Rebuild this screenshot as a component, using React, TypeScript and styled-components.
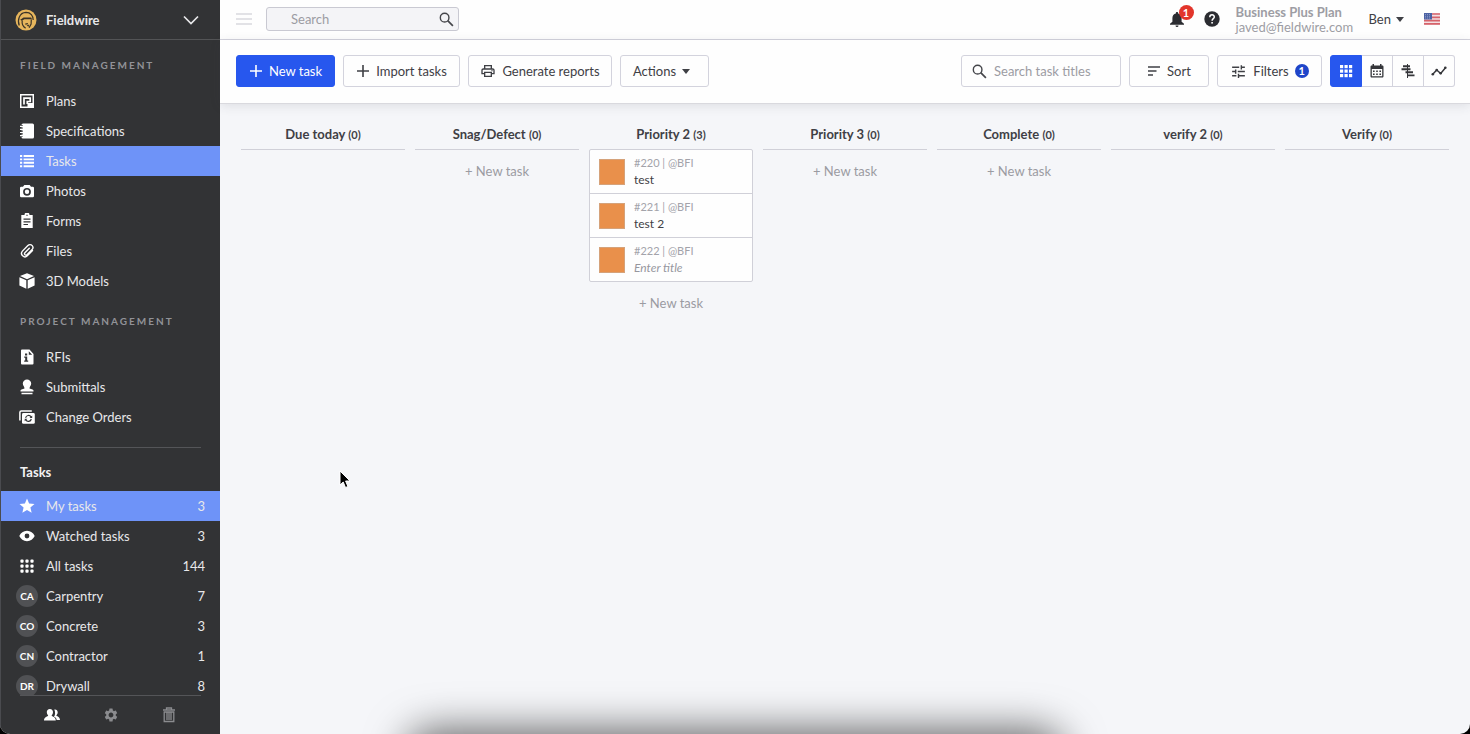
import React from "react";
import styled, { createGlobalStyle } from "styled-components";
import { MdTune, MdOutlinePrint, MdSettings, MdStar } from "react-icons/md";

const Global = createGlobalStyle`
  * { box-sizing: border-box; }
  html, body, #root { height: 100%; }
  body { margin: 0; background: #000; font-family: Lato, "Liberation Sans", sans-serif; font-size: 13px; color: #3f4045; }
  button, input { font: inherit; color: inherit; }
  button { cursor: pointer; }
  h1, h2, h3, ul, p { margin: 0; padding: 0; }
  ul { list-style: none; }
  a { color: inherit; text-decoration: none; }
`;

const Shell = styled.div`
  position: relative;
  display: flex;
  height: 100vh;
  overflow: hidden;
  border-radius: 0 0 10px 10px;
  background: #f5f6f9;
`;

/* ---------- Sidebar ---------- */

const Sidebar = styled.aside`
  display: flex;
  flex-direction: column;
  flex: 0 0 220px;
  background: #323335;
  border-left: 1px solid #4a4b4f;
  color: #e8e8ea;
`;

const ProjectSwitch = styled.button`
  display: flex;
  align-items: center;
  flex: none;
  gap: 9px;
  height: 40px;
  padding: 0 21px 0 14px;
  border: 0;
  border-bottom: 1px solid #535456;
  background: none;
  font-weight: 700;
  text-align: left;
`;

const ProjectName = styled.span`
  flex: 1;
`;

const SidebarScroll = styled.nav`
  flex: 1;
  min-height: 0;
  overflow: hidden;
`;

const SectionLabel = styled.h2`
  padding: 15px 19px 11px;
  font-size: 10px;
  line-height: 20px;
  font-weight: 700;
  letter-spacing: 2px;
  text-transform: uppercase;
  color: #919297;
`;

const ListHeading = styled.h2`
  margin: 15px 19px 0;
  padding: 14px 0 9px;
  border-top: 1px solid #545558;
  font-size: 13px;
  line-height: 20px;
  font-weight: 700;
  color: #f2f2f3;
`;

const NavLink = styled.a<{ $active?: boolean }>`
  display: grid;
  grid-template-columns: 22px 1fr auto;
  align-items: center;
  column-gap: 8px;
  height: 30px;
  padding: 0 15px;
  background: ${(p) => (p.$active ? "#6e93f8" : "transparent")};
  svg { justify-self: center; color: #fff; }
`;

const Initials = styled.span`
  display: flex;
  align-items: center;
  justify-content: center;
  width: 22px;
  height: 22px;
  border-radius: 50%;
  background: #505154;
  font-size: 10px;
  font-weight: 700;
  color: #fff;
`;

const SidebarFooter = styled.footer`
  display: flex;
  flex: none;
  align-items: center;
  justify-content: space-between;
  height: 39px;
  margin: 0 19px;
  padding: 0 24px;
  border-top: 1px solid #545558;
`;

const FooterButton = styled.button<{ $on?: boolean }>`
  display: flex;
  padding: 0;
  border: 0;
  background: none;
  color: ${(p) => (p.$on ? "#fff" : "#8b8c8f")};
`;

/* ---------- Main ---------- */

const Main = styled.main`
  display: flex;
  flex-direction: column;
  flex: 1;
  min-width: 0;
`;

const Header = styled.header`
  display: flex;
  align-items: center;
  flex: none;
  height: 40px;
  padding: 0 30px 1px 16px;
  background: #fefefe;
  border-bottom: 1px solid #d3d3dd;
`;

const IconButton = styled.button`
  position: relative;
  display: flex;
  padding: 0;
  border: 0;
  background: none;
`;

const GlobalSearch = styled.label`
  display: flex;
  align-items: center;
  width: 193px;
  height: 24px;
  margin-left: 14px;
  padding: 0 4px 0 24px;
  border: 1px solid #c9c9d2;
  border-radius: 3px;
  background: #f4f4f7;
`;

const TextInput = styled.input`
  flex: 1;
  min-width: 0;
  padding: 0;
  border: 0;
  outline: 0;
  background: none;
  &::placeholder { color: #9c9ca3; opacity: 1; }
`;

const HeaderRight = styled.div`
  display: flex;
  align-items: center;
  margin-left: auto;
`;

const AlertCount = styled.span`
  position: absolute;
  top: -5px;
  left: 11px;
  width: 15px;
  height: 15px;
  border-radius: 50%;
  background: #e2352b;
  color: #fff;
  font-size: 11px;
  line-height: 15px;
  font-weight: 700;
  text-align: center;
`;

const HelpButton = styled(IconButton)`
  margin-left: 18px;
`;

const Account = styled.div`
  width: 118px;
  margin: 2px 15px 0 16px;
  line-height: 15px;
  color: #9d9da4;
  white-space: nowrap;
`;

const UserMenu = styled.button`
  display: flex;
  align-items: center;
  gap: 5px;
  padding: 0;
  margin-right: 20px;
  border: 0;
  background: none;
`;

const Toolbar = styled.div`
  display: flex;
  align-items: center;
  flex: none;
  gap: 8px;
  height: 64px;
  padding: 0 15px 1px 16px;
  background: #fefefe;
  border-bottom: 1px solid #d9d9de;
  box-shadow: 0 2px 10px rgba(60, 60, 70, 0.12);
`;

const Button = styled.button<{ $primary?: boolean; $width: number }>`
  display: flex;
  align-items: center;
  justify-content: center;
  gap: 6px;
  width: ${(p) => p.$width}px;
  height: 32px;
  padding: 0;
  border: 1px solid ${(p) => (p.$primary ? "#2757ee" : "#d3d3dd")};
  border-radius: 3px;
  background: ${(p) => (p.$primary ? "#2757ee" : "#fefefe")};
  color: ${(p) => (p.$primary ? "#fff" : "#3f4045")};
  white-space: nowrap;
`;

const MenuButton = styled(Button)`
  padding-right: 6px;
`;

const TitleSearch = styled.label`
  display: flex;
  align-items: center;
  gap: 7px;
  width: 160px;
  height: 32px;
  margin-left: auto;
  padding: 0 10px;
  border: 1px solid #d3d3dd;
  border-radius: 3px;
`;

const FilterCount = styled.span`
  width: 14px;
  height: 14px;
  border-radius: 50%;
  background: #1f45c9;
  color: #fff;
  font-size: 11px;
  line-height: 14px;
  font-weight: 700;
  text-align: center;
`;

const ViewGroup = styled.div`
  display: flex;
  width: 125px;
  height: 32px;
`;

const ViewButton = styled.button<{ $active?: boolean }>`
  display: flex;
  align-items: center;
  justify-content: center;
  flex: 1;
  padding: 0;
  border: 1px solid ${(p) => (p.$active ? "#2757ee" : "#d3d3dd")};
  background: ${(p) => (p.$active ? "#2757ee" : "#fefefe")};
  color: ${(p) => (p.$active ? "#fff" : "#35363a")};
  &:not(:first-child) { border-left: 0; }
  &:first-child { border-radius: 3px 0 0 3px; }
  &:last-child { border-radius: 0 3px 3px 0; }
`;

const Board = styled.div`
  display: grid;
  grid-template-columns: repeat(7, minmax(0, 1fr));
  align-items: start;
  column-gap: 10px;
  padding: 20px 21px 0;
`;

const Column = styled.section`
  display: flex;
  flex-direction: column;
`;

const ColumnTitle = styled.h3<{ $line: boolean }>`
  height: ${(p) => (p.$line ? 26 : 25)}px;
  border-bottom: ${(p) => (p.$line ? "1px solid #d0d0d8" : "0")};
  font-size: 13px;
  line-height: 20px;
  font-weight: 700;
  text-align: center;
  small { font-size: 11px; }
`;

const Cards = styled.ul`
  border: 1px solid #d0d0d8;
  border-radius: 2px;
  background: #fefefe;
`;

const Card = styled.li`
  display: flex;
  align-items: center;
  gap: 9px;
  height: 44px;
  padding: 0 9px;
  &:not(:last-child) { border-bottom: 1px solid #d0d0d8; }
  &:last-child { height: 43px; }
`;

const Swatch = styled.span`
  width: 26px;
  height: 26px;
  border: 1px solid #d5a27a;
  background: #e9904b;
`;

const CardText = styled.div`
  padding-bottom: 2px;
  line-height: 17px;
`;

const CardMeta = styled.p`
  font-size: 11px;
  color: #a3a3aa;
`;

const CardTitle = styled.p<{ $empty: boolean }>`
  font-size: 12px;
  color: ${(p) => (p.$empty ? "#97979e" : "#3f4045")};
  font-style: ${(p) => (p.$empty ? "italic" : "normal")};
`;

const AddTask = styled.button`
  height: 42px;
  padding: 0;
  border: 0;
  background: none;
  color: #9b9ba2;
`;

const DockShadow = styled.div`
  position: absolute;
  left: 29%;
  right: 29%;
  bottom: -36px;
  height: 20px;
  border-radius: 10px;
  box-shadow: 0 0 40px 20px rgba(0, 0, 0, 0.6);
  pointer-events: none;
`;

const Pointer = styled.svg`
  position: absolute;
  left: 338px;
  top: 470px;
  pointer-events: none;
`;

/* ---------- Icons ---------- */

type IconProps = { size?: number; box?: number; children: React.ReactNode };
const Icon = ({ size = 16, box = 16, children }: IconProps) => (
  <svg width={size} height={size} viewBox={`0 0 ${box} ${box}`} fill="currentColor" aria-hidden="true">
    {children}
  </svg>
);

const LogoIcon = () => (
  <Icon size={22} box={22}>
    <circle cx="11" cy="11" r="10.5" fill="#e6b55c" />
    <path d="M4.300 16.500C2 11.500 4.200 3.600 11 3.400c4.600 0 7.300 3.300 7.200 7.600" fill="none" stroke="#3a3328" strokeWidth="1.200" />
    <path d="M5.200 10.800 8.600 8.600h7.600l.8 1.600H9.400l-2.600 1.500z" fill="#3a3328" />
    <path d="M7.200 11.500c-.4 3 .5 6 3.400 7.600M16.300 10.500l-.2 4.500-2 3.800M10.300 15.200l2.600-.5" fill="none" stroke="#3a3328" strokeWidth="1.200" />
    <path d="m11.600 16.400 2.600-1-.6 2.400z" fill="#3a3328" />
  </Icon>
);

const PlansIcon = () => (
  <Icon>
    <path fillRule="evenodd" d="M1 1h14v14H1zM2.500 2.500v11h11v-11z" />
    <path d="M5 11.500V5.200h6.200v3.300H8.300v2.600" fill="none" stroke="currentColor" strokeWidth="1.700" />
    <path d="M8.500 10h5.500v4H8.500z" />
  </Icon>
);

const SpecsIcon = () => (
  <Icon>
    <path d="M4 .5h9.500A1.500 1.500 0 0 1 15 2v12a1.500 1.500 0 0 1-1.500 1.500H4A1.500 1.500 0 0 1 2.500 14V2A1.500 1.500 0 0 1 4 .5z" />
    <path d="M.8 3.300h3M.8 6.400h3M.8 9.500h3M.8 12.600h3" stroke="#323335" strokeWidth="2.400" />
    <path d="M1 3.300h3.200M1 6.400h3.200M1 9.500h3.200M1 12.600h3.200" stroke="currentColor" strokeWidth="1.200" />
  </Icon>
);

const ListIcon = () => (
  <Icon>
    <path d="M1 3h2.200M1 6.400h2.200M1 9.800h2.200M1 13.200h2.200M4.600 3H15M4.600 6.400H15M4.600 9.800H15M4.600 13.200H15" stroke="currentColor" strokeWidth="1.900" />
  </Icon>
);

const CameraIcon = () => (
  <Icon>
    <path fillRule="evenodd" d="M5.300 2h5.400L12 3.800h1.800A1.200 1.200 0 0 1 15 5v8a1.200 1.200 0 0 1-1.200 1.200H2.200A1.200 1.200 0 0 1 1 13V5a1.200 1.200 0 0 1 1.200-1.200H4zM8 4.900a3.900 3.900 0 1 0 0 7.800 3.900 3.900 0 0 0 0-7.800zm0 1.700a2.200 2.200 0 1 1 0 4.400 2.200 2.200 0 0 1 0-4.400z" />
  </Icon>
);

const FormsIcon = () => (
  <Icon>
    <path fillRule="evenodd" d="M2.300 2h3.200a2.500 2.500 0 0 1 5 0h3.200v13H2.300zm5-.3v1h1.400v-1zM4.500 5.500v1.200h7V5.500zm0 2.700v1.200h7V8.200zm0 2.700v1.200H9v-1.200z" />
  </Icon>
);

const ClipIcon = () => (
  <Icon>
    <path d="M13.500 7.400 8.300 12.800a3.400 3.400 0 0 1-4.900-4.700l5.500-5.600a2.900 2.900 0 0 1 4.300.1c1 1.200.9 2.900-.1 4L8 11.700a1.400 1.400 0 0 1-2.100-1.900l4.400-4.600" fill="none" stroke="currentColor" strokeWidth="1.400" strokeLinecap="round" />
  </Icon>
);

const CubeIcon = () => (
  <Icon>
    <path d="M8 .2 15 3 8 6.200 1 3zM.4 4.300l6.900 3v8.400L.4 12.500zM15.600 4.300l-6.900 3v8.400l6.900-3.200z" />
  </Icon>
);

const RfiIcon = () => (
  <Icon>
    <path fillRule="evenodd" d="M3 .5h7.500L14.500 5v9.500a1 1 0 0 1-1 1H3a1 1 0 0 1-1-1v-13a1 1 0 0 1 1-1zm6.800 1.700v3.600h3.400zM6 4.500v2h2.200v-2zM5.200 7.500v1.300h1v2.700h-1v1.300h4v-1.300h-1v-4z" />
  </Icon>
);

const StampIcon = () => (
  <Icon>
    <path d="M8 .4a4.200 4.200 0 0 1 4.200 4.200c0 2.200-1.700 3-1.700 4.900l3 .9c.6.200 1 .5 1 1.100v1h-13v-1c0-.6.400-.9 1-1.100l3-.9c0-1.900-1.700-2.700-1.700-4.900A4.200 4.200 0 0 1 8 .4zM2.500 13.800h11v1.400h-11z" />
  </Icon>
);

const ChangeIcon = () => (
  <Icon>
    <path d="M.9 11.500V3.400c0-.8.600-1.400 1.400-1.400h10.500" fill="none" stroke="currentColor" strokeWidth="1.500" />
    <rect x="3" y="4" width="12.800" height="10.800" rx="1.400" />
    <path d="M6.600 8.800a3 3 0 0 1 5.500-.9M12.300 10a3 3 0 0 1-5.500.9" fill="none" stroke="#323335" strokeWidth="1.200" />
    <path d="M13.200 6.500v2.600h-2.700zM5.700 12.300V9.700h2.700z" fill="#323335" />
  </Icon>
);

const EyeIcon = () => (
  <Icon>
    <path fillRule="evenodd" d="M8 2.800c3.500 0 6.300 2.200 7.700 5.200-1.400 3-4.200 5.200-7.700 5.200S1.700 11 .3 8C1.700 5 4.500 2.800 8 2.800zm0 2.800a2.400 2.400 0 1 0 0 4.800 2.400 2.400 0 0 0 0-4.800z" />
  </Icon>
);

const DotsIcon = () => (
  <Icon>
    {[1, 6, 11].map((y) => [2, 7, 12].map((x) => <rect key={`${x}-${y}`} x={x - 0.6} y={y + 0.6} width="3.200" height="3.200" rx="1" />))}
  </Icon>
);

const GridIcon = () => (
  <Icon>
    {[2, 6.5, 11].map((y) => [2, 6.5, 11].map((x) => <rect key={`${x}-${y}`} x={x} y={y} width="3.200" height="3.200" />))}
  </Icon>
);

const PeopleIcon = () => (
  <Icon>
    <path d="M10.300 2.500c1.900-.4 3.400.8 3.400 2.700 0 1.300-.6 2.500-1.400 3 .1 1.200 3.700 1.300 3.700 4.800h-3.300c-.2-2-1.300-2.700-2.700-3.300 1.300-1.700 1.500-4.800.3-7.200z" />
    <path d="M5.900 1.900c2 0 3.100 1.300 3.100 3.200 0 1.400-.6 2.600-1.400 3.200.1 1.600 4.200 1.200 4.200 5.200H0c0-4 4.100-3.600 4.200-5.200-.8-.6-1.400-1.800-1.400-3.200 0-1.900 1.100-3.200 3.100-3.200z" />
  </Icon>
);

const TrashIcon = () => (
  <Icon>
    <path d="M5.500 2.500V1h5v1.500M2 3h12M3.200 5v9.500h9.600V5M6 5v8M8 5v8M10 5v8M2.600 5h10.800" fill="none" stroke="currentColor" strokeWidth="1.300" />
  </Icon>
);

const SearchIcon = () => (
  <Icon size={15}>
    <g fill="none" stroke="#45464b" strokeWidth="1.500">
      <circle cx="6" cy="6" r="4.600" />
      <path d="m9.300 9.300 5.500 5.500" strokeWidth="1.800" />
    </g>
  </Icon>
);

const PlusIcon = () => (
  <Icon size={14} box={14}>
    <path d="M7 1v12M1 7h12" stroke="currentColor" strokeWidth="1.600" />
  </Icon>
);

const CaretIcon = () => (
  <svg width="8" height="5" viewBox="0 0 8 5" fill="currentColor" aria-hidden="true"><path d="M0 0h8L4 5z" /></svg>
);

const BellIcon = () => (
  <Icon size={18} box={18}>
    <path d="M9 2c.7 0 1.100.4 1.100 1v.5c2.200.5 3.500 2.300 3.500 4.600v3.700l2.400 2v.900H2v-.9l2.400-2V8.100c0-2.300 1.300-4.100 3.500-4.600V3c0-.6.400-1 1.100-1zM7.500 15.500h3a1.500 1.500 0 0 1-3 0z" fill="#2b2c31" />
  </Icon>
);

const HelpIcon = () => (
  <Icon>
    <circle cx="8" cy="8" r="7.700" fill="#2b2c31" />
    <path d="M5.800 6.300C5.800 3 10.300 3.200 10.300 6c0 1.600-2.200 1.700-2.200 3.700" fill="none" stroke="#fff" strokeWidth="1.500" />
    <rect x="7.300" y="11" width="1.600" height="1.600" fill="#fff" />
  </Icon>
);

const FlagIcon = () => (
  <svg width="16" height="12" viewBox="0 0 16 12" role="img" aria-label="United States">
    <rect width="16" height="12" rx="1" fill="#f3dfe2" />
    <path d="M0 1h16M0 4.300h16M0 7.600h16M0 10.900h16" stroke="#d6636b" strokeWidth="1.700" />
    <rect width="8" height="6.500" fill="#4c62a4" />
    <path d="M1 1.600h6M1 3.300h6M1 5h6" stroke="#a8b3d6" strokeWidth=".7" strokeDasharray="1 1" />
  </svg>
);

const SortIcon = () => (
  <Icon size={14} box={14}>
    <path d="M1 3h12M1 7h8.500M1 11h5" stroke="currentColor" strokeWidth="1.500" />
  </Icon>
);

const CalendarIcon = () => (
  <Icon>
    <path fillRule="evenodd" d="M3.500 1H5v1.500h6V1h1.500v1.500h.7c.8 0 1.300.5 1.300 1.300v9.400c0 .8-.5 1.300-1.300 1.300H2.800c-.8 0-1.300-.5-1.300-1.300V3.800c0-.8.500-1.300 1.300-1.300h.7zM2.800 6v7.200h10.400V6z" />
    <path d="M4 8.200h8M4 11.200h8" stroke="currentColor" strokeWidth="1.600" strokeDasharray="1.600 1.600" />
  </Icon>
);

const GanttIcon = () => (
  <Icon>
    <path d="M7.500 1v14" stroke="currentColor" strokeWidth="1" />
    <path d="M3 3.200h7M1.500 6.200h9M5.500 9.300h7.500M7.500 12.400h7" stroke="currentColor" strokeWidth="1.900" />
  </Icon>
);

const TrendIcon = () => (
  <Icon>
    <path d="M1.500 11.500 5.700 7l4 3.500 5-6" fill="none" stroke="currentColor" strokeWidth="1.500" />
    <circle cx="1.800" cy="11.300" r="1.300" /><circle cx="5.700" cy="7" r="1.300" /><circle cx="9.700" cy="10.300" r="1.300" /><circle cx="14.300" cy="4.800" r="1.300" />
  </Icon>
);

/* ---------- Data ---------- */

type Item = { label: string; icon?: React.ReactNode; initials?: string; count?: number; active?: boolean };

const fieldItems: Item[] = [
  { label: "Plans", icon: <PlansIcon /> },
  { label: "Specifications", icon: <SpecsIcon /> },
  { label: "Tasks", icon: <ListIcon />, active: true },
  { label: "Photos", icon: <CameraIcon /> },
  { label: "Forms", icon: <FormsIcon /> },
  { label: "Files", icon: <ClipIcon /> },
  { label: "3D Models", icon: <CubeIcon /> },
];

const projectItems: Item[] = [
  { label: "RFIs", icon: <RfiIcon /> },
  { label: "Submittals", icon: <StampIcon /> },
  { label: "Change Orders", icon: <ChangeIcon /> },
];

const taskItems: Item[] = [
  { label: "My tasks", icon: <MdStar size={18} />, count: 3, active: true },
  { label: "Watched tasks", icon: <EyeIcon />, count: 3 },
  { label: "All tasks", icon: <DotsIcon />, count: 144 },
  { label: "Carpentry", initials: "CA", count: 7 },
  { label: "Concrete", initials: "CO", count: 3 },
  { label: "Contractor", initials: "CN", count: 1 },
  { label: "Drywall", initials: "DR", count: 8 },
];

type Task = { id: number; title?: string };
const columns: { title: string; tasks: Task[]; add: boolean }[] = [
  { title: "Due today", tasks: [], add: false },
  { title: "Snag/Defect", tasks: [], add: true },
  { title: "Priority 2", tasks: [{ id: 220, title: "test" }, { id: 221, title: "test 2" }, { id: 222 }], add: true },
  { title: "Priority 3", tasks: [], add: true },
  { title: "Complete", tasks: [], add: true },
  { title: "verify 2", tasks: [], add: false },
  { title: "Verify", tasks: [], add: false },
];

const NavList = ({ items }: { items: Item[] }) => (
  <ul>
    {items.map((item) => (
      <li key={item.label}>
        <NavLink href="#" $active={item.active}>
          {item.initials ? <Initials>{item.initials}</Initials> : item.icon}
          <span>{item.label}</span>
          {item.count !== undefined && <span>{item.count}</span>}
        </NavLink>
      </li>
    ))}
  </ul>
);

export default function App() {
  return (
    <>
      <Global />
      <Shell>
        <Sidebar>
          <ProjectSwitch>
            <LogoIcon />
            <ProjectName>Fieldwire</ProjectName>
            <Icon><path d="m1 4.500 7 7 7-7" fill="none" stroke="currentColor" strokeWidth="1.700" /></Icon>
          </ProjectSwitch>
          <SidebarScroll>
            <SectionLabel>Field management</SectionLabel>
            <NavList items={fieldItems} />
            <SectionLabel>Project management</SectionLabel>
            <NavList items={projectItems} />
            <ListHeading>Tasks</ListHeading>
            <NavList items={taskItems} />
          </SidebarScroll>
          <SidebarFooter>
            <FooterButton $on aria-label="People"><PeopleIcon /></FooterButton>
            <FooterButton aria-label="Settings"><MdSettings size={16} /></FooterButton>
            <FooterButton aria-label="Trash"><TrashIcon /></FooterButton>
          </SidebarFooter>
        </Sidebar>

        <Main>
          <Header>
            <IconButton aria-label="Menu">
              <Icon><path d="M0 3h16M0 8h16M0 13h16" stroke="#d9d9de" strokeWidth="1.500" /></Icon>
            </IconButton>
            <GlobalSearch>
              <TextInput type="text" placeholder="Search" aria-label="Search" />
              <SearchIcon />
            </GlobalSearch>
            <HeaderRight>
              <IconButton aria-label="Notifications"><BellIcon /><AlertCount>1</AlertCount></IconButton>
              <HelpButton aria-label="Help"><HelpIcon /></HelpButton>
              <Account><strong>Business Plus Plan</strong><br />javed@fieldwire.com</Account>
              <UserMenu>Ben <CaretIcon /></UserMenu>
              <FlagIcon />
            </HeaderRight>
          </Header>

          <Toolbar>
            <Button $primary $width={99}><PlusIcon />New task</Button>
            <Button $width={117}><PlusIcon />Import tasks</Button>
            <Button $width={144}><MdOutlinePrint size={16} />Generate reports</Button>
            <MenuButton $width={89}>Actions <CaretIcon /></MenuButton>
            <TitleSearch>
              <SearchIcon />
              <TextInput type="text" placeholder="Search task titles" aria-label="Search task titles" />
            </TitleSearch>
            <Button $width={80}><SortIcon />Sort</Button>
            <Button $width={105}><MdTune size={17} />Filters<FilterCount>1</FilterCount></Button>
            <ViewGroup>
              <ViewButton $active aria-label="Board view"><GridIcon /></ViewButton>
              <ViewButton aria-label="Calendar view"><CalendarIcon /></ViewButton>
              <ViewButton aria-label="Gantt view"><GanttIcon /></ViewButton>
              <ViewButton aria-label="Report view"><TrendIcon /></ViewButton>
            </ViewGroup>
          </Toolbar>

          <Board>
            {columns.map((col) => (
              <Column key={col.title}>
                <ColumnTitle $line={col.tasks.length === 0}>
                  {col.title} <small>({col.tasks.length})</small>
                </ColumnTitle>
                {col.tasks.length > 0 && (
                  <Cards>
                    {col.tasks.map((task) => (
                      <Card key={task.id}>
                        <Swatch />
                        <CardText>
                          <CardMeta>#{task.id} | @BFI</CardMeta>
                          <CardTitle $empty={!task.title}>{task.title ?? "Enter title"}</CardTitle>
                        </CardText>
                      </Card>
                    ))}
                  </Cards>
                )}
                {col.add && <AddTask>+ New task</AddTask>}
              </Column>
            ))}
          </Board>
        </Main>

        <DockShadow />
        <Pointer width="14" height="20" viewBox="0 0 14 20" aria-hidden="true">
          <path d="M2 1v14l3.200-3 2.300 5.500 2.400-1L7.600 11H12z" fill="#000" stroke="#fff" strokeWidth="1" />
        </Pointer>
      </Shell>
    </>
  );
}
